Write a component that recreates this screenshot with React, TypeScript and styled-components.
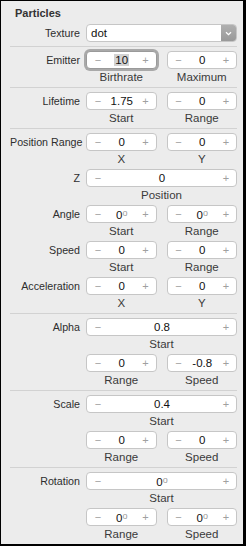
import React from 'react';
import styled, { createGlobalStyle, css } from 'styled-components';

const GlobalStyle = createGlobalStyle`
  html, body {
    margin: 0;
    padding: 0;
    background: #000;
  }
  body {
    font-family: 'Liberation Sans', Arial, sans-serif;
  }
`;

const Panel = styled.div`
  margin: 1px 3px 2px 1px;
  height: 543px;
  background: #ececec;
  box-sizing: border-box;
  overflow: hidden;
`;

const Title = styled.div`
  height: 23px;
  padding-left: 14px;
  font-size: 11px;
  font-weight: bold;
  color: #333;
  line-height: 24px;
`;

const Section = styled.div<{ $sep?: boolean }>`
  display: flex;
  flex-direction: column;
  gap: 2px;
  padding: ${(p) => (p.$sep ? '4px 0 2px' : '0 0 4px')};
  margin-left: 9px;
  margin-right: 6px;
  border-bottom: 1px solid #d2d2d2;

  &:last-child {
    border-bottom: none;
  }
`;

const Row = styled.div`
  display: grid;
  grid-template-columns: 70px 1fr;
  column-gap: 6px;
`;

const Label = styled.div`
  height: 18px;
  line-height: 18px;
  text-align: right;
  font-size: 10.7px;
  color: #2e2e2e;
  white-space: nowrap;
`;

const Fields = styled.div<{ $cols: number }>`
  display: grid;
  grid-template-columns: ${(p) => (p.$cols === 2 ? '1fr 1fr' : '1fr')};
  column-gap: 10px;
`;

const Field = styled.div`
  display: flex;
  flex-direction: column;
`;

const Stepper = styled.div<{ $focused?: boolean }>`
  height: 18px;
  box-sizing: border-box;
  background: #fff;
  border: 1px solid #c6c6c6;
  border-radius: 4px;
  display: flex;
  align-items: center;
  padding: 0 6px 0 7px;
  font-size: 11px;
  ${(p) =>
    p.$focused &&
    css`
      box-shadow: 0 0 0 2px #a9a9a9;
      border-color: #9a9a9a;
    `}
`;

const Step = styled.span`
  color: #a0a0a0;
  font-size: 11px;
  width: 8px;
  text-align: center;
`;

const Value = styled.span`
  flex: 1;
  text-align: center;
  color: #111;
  font-size: 11.5px;
`;

const Selected = styled.span`
  background: #d2d2d2;
  padding: 0 1px;
`;

const Deg = styled.span`
  color: #9a9a9a;
  font-size: 9px;
  vertical-align: 3px;
`;

const Caption = styled.div`
  height: 16px;
  line-height: 17px;
  text-align: center;
  font-size: 11.5px;
  color: #3a3a3a;
`;

const Select = styled.div`
  height: 18px;
  box-sizing: border-box;
  background: #fff;
  border: 1px solid #c6c6c6;
  border-radius: 4px;
  display: flex;
  align-items: stretch;
  overflow: hidden;
`;

const SelectText = styled.span`
  flex: 1;
  padding-left: 4px;
  font-size: 11.5px;
  line-height: 16px;
  color: #111;
`;

const SelectArrow = styled.span`
  width: 15px;
  background: linear-gradient(#b0b0b0, #999);
  display: flex;
  align-items: center;
  justify-content: center;
`;

type F = { v: string; caption?: string; deg?: boolean; focused?: boolean };

const Num: React.FC<F> = ({ v, deg, focused }) => (
  <Stepper $focused={focused}>
    <Step>−</Step>
    <Value>
      {focused ? <Selected>{v}</Selected> : v}
      {deg && <Deg>o</Deg>}
    </Value>
    <Step>+</Step>
  </Stepper>
);

const ParamRow: React.FC<{ label?: string; fields: F[] }> = ({ label, fields }) => (
  <Row>
    <Label>{label}</Label>
    <Fields $cols={fields.length}>
      {fields.map((f, i) => (
        <Field key={i}>
          <Num {...f} />
          <Caption>{f.caption}</Caption>
        </Field>
      ))}
    </Fields>
  </Row>
);

export default function App() {
  return (
    <>
      <GlobalStyle />
      <Panel>
        <Title>Particles</Title>
        <Section>
          <Row>
            <Label>Texture</Label>
            <Select>
              <SelectText>dot</SelectText>
              <SelectArrow>
                <svg width="7" height="5" viewBox="0 0 7 5">
                  <path d="M1 1.2 L3.5 3.6 L6 1.2" stroke="#fff" strokeWidth="1.3" fill="none" />
                </svg>
              </SelectArrow>
            </Select>
          </Row>
        </Section>
        <Section $sep>
          <ParamRow
            label="Emitter"
            fields={[
              { v: '10', caption: 'Birthrate', focused: true },
              { v: '0', caption: 'Maximum' },
            ]}
          />
        </Section>
        <Section $sep>
          <ParamRow
            label="Lifetime"
            fields={[
              { v: '1.75', caption: 'Start' },
              { v: '0', caption: 'Range' },
            ]}
          />
        </Section>
        <Section $sep>
          <ParamRow
            label="Position Range"
            fields={[
              { v: '0', caption: 'X' },
              { v: '0', caption: 'Y' },
            ]}
          />
          <ParamRow label="Z" fields={[{ v: '0', caption: 'Position' }]} />
          <ParamRow
            label="Angle"
            fields={[
              { v: '0', caption: 'Start', deg: true },
              { v: '0', caption: 'Range', deg: true },
            ]}
          />
          <ParamRow
            label="Speed"
            fields={[
              { v: '0', caption: 'Start' },
              { v: '0', caption: 'Range' },
            ]}
          />
          <ParamRow
            label="Acceleration"
            fields={[
              { v: '0', caption: 'X' },
              { v: '0', caption: 'Y' },
            ]}
          />
        </Section>
        <Section $sep>
          <ParamRow label="Alpha" fields={[{ v: '0.8', caption: 'Start' }]} />
          <ParamRow
            fields={[
              { v: '0', caption: 'Range' },
              { v: '-0.8', caption: 'Speed' },
            ]}
          />
        </Section>
        <Section $sep>
          <ParamRow label="Scale" fields={[{ v: '0.4', caption: 'Start' }]} />
          <ParamRow
            fields={[
              { v: '0', caption: 'Range' },
              { v: '0', caption: 'Speed' },
            ]}
          />
        </Section>
        <Section $sep>
          <ParamRow label="Rotation" fields={[{ v: '0', caption: 'Start', deg: true }]} />
          <ParamRow
            fields={[
              { v: '0', caption: 'Range', deg: true },
              { v: '0', caption: 'Speed', deg: true },
            ]}
          />
        </Section>
      </Panel>
    </>
  );
}
